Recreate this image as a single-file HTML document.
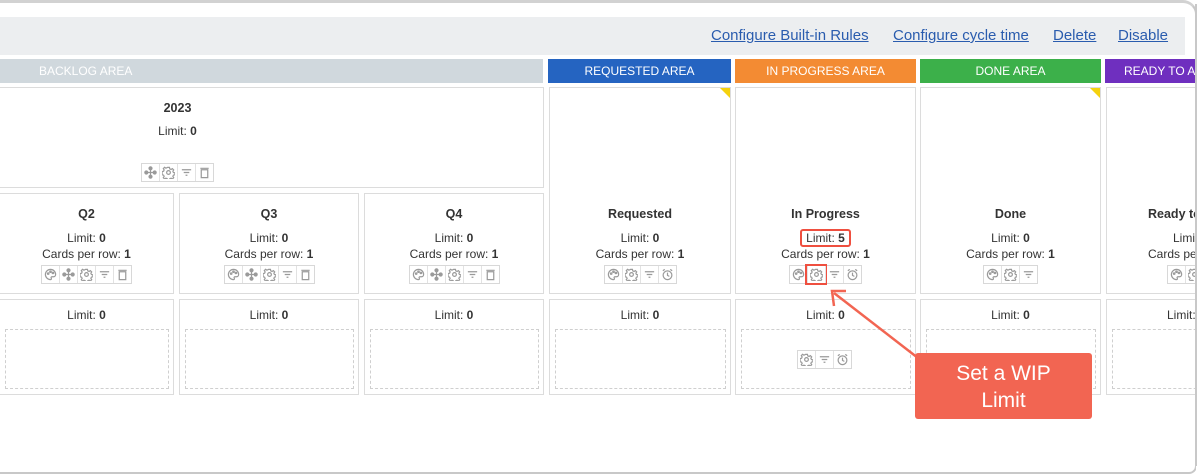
<!DOCTYPE html>
<html><head><style>
body{margin:0;width:1200px;height:473px;overflow:hidden;background:#fff;font-family:"Liberation Sans",sans-serif;position:relative}
.a{position:absolute}
.frame{left:0;top:0;width:1195px;height:469px;border:2px solid #c8c8c8;border-left:none;border-top-right-radius:14px;border-bottom-right-radius:8px;border-top:3px solid #d2d2d2}
.bar{left:0;top:17px;width:1185px;height:38px;background:#eceef0}
.lnk{top:27px;color:#2a5cae;text-decoration:underline;font-size:15px}
.hd{top:59px;height:24px;color:#fff;font-size:12px;line-height:24px;text-align:center}
.bx{border:1px solid #dcdcdc;box-sizing:border-box;text-align:center;font-size:12px;color:#333;white-space:nowrap}
.t{font-weight:bold;font-size:12.5px}
.ic{display:inline-flex;border:1px solid #d8d8d8}
.ic span{width:17px;height:17px;border-left:1px solid #e2e2e2;display:flex;align-items:center;justify-content:center}
.ic span:first-child{border-left:none}
.ic svg{width:13px;height:13px;fill:none;stroke:#9a9a9a;stroke-width:1.3}
.dash{border:1.5px dashed #cfcfcf;box-sizing:border-box}
.tri{width:0;height:0;border-top:10px solid #f5d20e;border-left:10px solid transparent}
</style></head><body>
<svg width="0" height="0" style="position:absolute">
<defs>
<symbol id="pal" viewBox="0 0 14 14"><path d="M7 1.5a5.5 5.5 0 1 0 0 11c1 0 1.2-.8.8-1.5-.5-.8 0-1.6 1-1.6h1.5c1.3 0 2.2-1 2.2-2.4C12.5 3.8 10 1.5 7 1.5z"/><circle cx="4.5" cy="6" r=".8"/><circle cx="7" cy="4" r=".8"/><circle cx="9.6" cy="5.3" r=".8"/></symbol>
<symbol id="mov" viewBox="0 0 14 14"><circle cx="7" cy="2.5" r="1.6" fill="#9a9a9a"/><circle cx="7" cy="11.5" r="1.6" fill="#9a9a9a"/><circle cx="2.5" cy="7" r="1.6" fill="#9a9a9a"/><circle cx="11.5" cy="7" r="1.6" fill="#9a9a9a"/><path d="M4 7h6M7 4v6"/></symbol>
<symbol id="gear" viewBox="0 0 14 14"><circle cx="7" cy="7" r="2"/><path d="M6 1.5h2l.4 1.6 1.4.6 1.4-.9 1.4 1.4-.9 1.4.6 1.4 1.6.4v2l-1.6.4-.6 1.4.9 1.4-1.4 1.4-1.4-.9-1.4.6-.4 1.6H6l-.4-1.6-1.4-.6-1.4.9-1.4-1.4.9-1.4-.6-1.4-1.6-.4V6l1.6-.4.6-1.4-.9-1.4 1.4-1.4 1.4.9 1.4-.6z"/></symbol>
<symbol id="fil" viewBox="0 0 14 14"><path d="M2 4h10M4 7h6M6 10h2"/></symbol>
<symbol id="del" viewBox="0 0 14 14"><path d="M3.5 4h7v8.5h-7zM2.5 2.5h9"/></symbol>
<symbol id="clk" viewBox="0 0 14 14"><circle cx="7" cy="7.8" r="4.7"/><path d="M7 5v3l2 1M2 3l2-1.5M12 3l-2-1.5"/></symbol>
</defs></svg>
<div class="a frame"></div>
<div class="a bar"></div>
<div class="a lnk" style="left:711px">Configure Built-in Rules</div>
<div class="a lnk" style="left:893px">Configure cycle time</div>
<div class="a lnk" style="left:1053px">Delete</div>
<div class="a lnk" style="left:1118px">Disable</div>

<div class="a hd" style="left:0;width:543px;background:#d0d8dd;text-align:left;padding-left:39px;box-sizing:border-box">BACKLOG AREA</div>
<div class="a hd" style="left:548px;width:183px;background:#2564c1">REQUESTED AREA</div>
<div class="a hd" style="left:735px;width:181px;background:#f38b33">IN PROGRESS AREA</div>
<div class="a hd" style="left:920px;width:181px;background:#3cb04a">DONE AREA</div>
<div class="a hd" style="left:1105px;width:95px;background:#6f2fbf;text-align:left;padding-left:19px;box-sizing:border-box;white-space:nowrap;overflow:hidden">READY TO ARCHIVE</div>

<div class="a bx" style="left:-1px;top:87px;width:545px;height:101px">
<div style="width:355px">
<div class="t" style="margin-top:13px">2023</div><div style="margin-top:9px">Limit: <b>0</b></div>
<div class="ic" style="margin-top:25px"><span><svg><use href="#mov"/></svg></span><span><svg><use href="#gear"/></svg></span><span><svg><use href="#fil"/></svg></span><span><svg><use href="#del"/></svg></span></div></div></div>

<div class="a bx" style="left:549px;top:87px;width:182px;height:207px"><div class="a tri" style="right:0;top:0"></div>
<div class="t" style="margin-top:119px">Requested</div><div style="margin-top:10px">Limit: <b>0</b></div><div style="margin-top:2px">Cards per row: <b>1</b></div>
<div class="ic" style="margin-top:4px"><span><svg><use href="#pal"/></svg></span><span><svg><use href="#gear"/></svg></span><span><svg><use href="#fil"/></svg></span><span><svg><use href="#clk"/></svg></span></div></div>
<div class="a bx" style="left:735px;top:87px;width:181px;height:207px">
<div class="t" style="margin-top:119px">In Progress</div><div style="margin-top:10px"><span style="border:2px solid #ef4f3f;border-radius:3px;padding:0 4px">Limit: <b>5</b></span></div><div style="margin-top:2px">Cards per row: <b>1</b></div>
<div class="ic" style="margin-top:4px"><span><svg><use href="#pal"/></svg></span><span style="outline:2px solid #ef4f3f"><svg><use href="#gear"/></svg></span><span><svg><use href="#fil"/></svg></span><span><svg><use href="#clk"/></svg></span></div></div>
<div class="a bx" style="left:920px;top:87px;width:181px;height:207px"><div class="a tri" style="right:0;top:0"></div>
<div class="t" style="margin-top:119px">Done</div><div style="margin-top:10px">Limit: <b>0</b></div><div style="margin-top:2px">Cards per row: <b>1</b></div>
<div class="ic" style="margin-top:4px"><span><svg><use href="#pal"/></svg></span><span><svg><use href="#gear"/></svg></span><span><svg><use href="#fil"/></svg></span></div></div>
<div class="a bx" style="left:1106px;top:87px;width:100px;height:207px;text-align:left;padding-left:41px">
<div class="t" style="margin-top:119px">Ready to Archive</div><div style="margin-top:10px;padding-left:25px">Limit: <b>0</b></div><div style="margin-top:2px">Cards per row: <b>1</b></div>
<div class="ic" style="margin-top:4px;margin-left:19px"><span><svg><use href="#pal"/></svg></span><span><svg><use href="#gear"/></svg></span></div></div>

<div class="a bx" style="left:-1px;top:193px;width:175px;height:101px"><div class="t" style="margin-top:13px">Q2</div><div style="margin-top:10px">Limit: <b>0</b></div><div style="margin-top:2px">Cards per row: <b>1</b></div><div class="ic" style="margin-top:4px"><span><svg><use href="#pal"/></svg></span><span><svg><use href="#mov"/></svg></span><span><svg><use href="#gear"/></svg></span><span><svg><use href="#fil"/></svg></span><span><svg><use href="#del"/></svg></span></div></div>
<div class="a bx" style="left:179px;top:193px;width:180px;height:101px"><div class="t" style="margin-top:13px">Q3</div><div style="margin-top:10px">Limit: <b>0</b></div><div style="margin-top:2px">Cards per row: <b>1</b></div><div class="ic" style="margin-top:4px"><span><svg><use href="#pal"/></svg></span><span><svg><use href="#mov"/></svg></span><span><svg><use href="#gear"/></svg></span><span><svg><use href="#fil"/></svg></span><span><svg><use href="#del"/></svg></span></div></div>
<div class="a bx" style="left:364px;top:193px;width:180px;height:101px"><div class="t" style="margin-top:13px">Q4</div><div style="margin-top:10px">Limit: <b>0</b></div><div style="margin-top:2px">Cards per row: <b>1</b></div><div class="ic" style="margin-top:4px"><span><svg><use href="#pal"/></svg></span><span><svg><use href="#mov"/></svg></span><span><svg><use href="#gear"/></svg></span><span><svg><use href="#fil"/></svg></span><span><svg><use href="#del"/></svg></span></div></div>

<div class="a bx" style="left:-1px;top:299px;width:175px;height:96px"><div style="margin-top:8px">Limit: <b>0</b></div><div class="a dash" style="left:5px;top:29px;width:164px;height:60px"></div></div>
<div class="a bx" style="left:179px;top:299px;width:180px;height:96px"><div style="margin-top:8px">Limit: <b>0</b></div><div class="a dash" style="left:5px;top:29px;width:169px;height:60px"></div></div>
<div class="a bx" style="left:364px;top:299px;width:180px;height:96px"><div style="margin-top:8px">Limit: <b>0</b></div><div class="a dash" style="left:5px;top:29px;width:169px;height:60px"></div></div>
<div class="a bx" style="left:549px;top:299px;width:182px;height:96px"><div style="margin-top:8px">Limit: <b>0</b></div><div class="a dash" style="left:5px;top:29px;width:171px;height:60px"></div></div>
<div class="a bx" style="left:735px;top:299px;width:181px;height:96px"><div style="margin-top:8px">Limit: <b>0</b></div><div class="a dash" style="left:5px;top:29px;width:170px;height:60px"></div><div class="ic a" style="left:61px;top:50px"><span><svg><use href="#gear"/></svg></span><span><svg><use href="#fil"/></svg></span><span><svg><use href="#clk"/></svg></span></div></div>
<div class="a bx" style="left:920px;top:299px;width:181px;height:96px"><div style="margin-top:8px">Limit: <b>0</b></div><div class="a dash" style="left:5px;top:29px;width:170px;height:60px"></div></div>
<div class="a bx" style="left:1106px;top:299px;width:100px;height:96px"><div style="margin-top:8px;padding-left:60px;text-align:left">Limit: <b>0</b></div><div class="a dash" style="left:5px;top:29px;width:100px;height:60px"></div></div>

<svg class="a" style="left:0;top:0" width="1200" height="473"><line x1="918" y1="358" x2="834" y2="293" stroke="#f26552" stroke-width="2.5"/><polyline points="834,306 832,291 846,291" fill="none" stroke="#f26552" stroke-width="2.5"/></svg>
<div class="a" style="left:915px;top:353px;width:177px;height:66px;background:#f26552;border-radius:3px;color:#fff;font-size:21px;text-align:center;line-height:27px;padding-top:7px;box-sizing:border-box">Set a WIP<br>Limit</div>
<div class="a" style="left:1196px;top:0;width:4px;height:473px;background:#fff"></div>
<div class="a" style="left:1195px;top:4px;width:2px;height:462px;background:#c8c8c8"></div>
</body></html>
